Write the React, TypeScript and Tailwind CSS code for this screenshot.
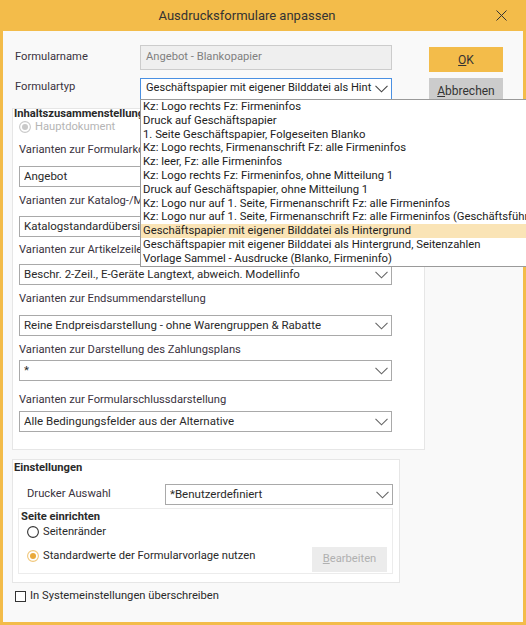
import React from "react";

const Chevron = ({ color = "#666" }: { color?: string }) => (
  <svg width="13" height="8" viewBox="0 0 13 8" className="shrink-0">
    <polyline points="0.5,0.8 6.5,6.8 12.5,0.8" fill="none" stroke={color} strokeWidth="1.1" />
  </svg>
);

const Select = ({ text, className = "" }: { text: string; className?: string }) => (
  <div className={`h-[21px] border border-[#a9a9a9] bg-white flex items-center pl-[4px] pr-[3px] text-[11.5px] ${className}`}>
    <span className="flex-1 overflow-hidden whitespace-nowrap text-[#2a2a2a]">{text}</span>
    <Chevron />
  </div>
);

const Label = ({ text, className = "" }: { text: string; className?: string }) => (
  <div className={`h-[16px] leading-[16px] text-[#3a3340] whitespace-nowrap ${className}`}>{text}</div>
);

const items = [
  "Kz: Logo rechts Fz: Firmeninfos",
  "Druck auf Geschäftspapier",
  "1. Seite Geschäftspapier, Folgeseiten Blanko",
  "Kz: Logo rechts, Firmenanschrift Fz: alle Firmeninfos",
  "Kz: leer, Fz: alle Firmeninfos",
  "Kz: Logo rechts Fz: Firmeninfos, ohne Mitteilung 1",
  "Druck auf Geschäftspapier, ohne Mitteilung 1",
  "Kz: Logo nur auf 1. Seite, Firmenanschrift Fz: alle Firmeninfos",
  "Kz: Logo nur auf 1. Seite, Firmenanschrift Fz: alle Firmeninfos (Geschäftsführer)",
  "Geschäftspapier mit eigener Bilddatei als Hintergrund",
  "Geschäftspapier mit eigener Bilddatei als Hintergrund, Seitenzahlen",
  "Vorlage Sammel - Ausdrucke (Blanko, Firmeninfo)",
];

export default function App() {
  return (
    <div
      className="relative w-[526px] h-[625px] bg-[#f3bc4a] flex flex-col text-[11.2px] overflow-hidden"
      style={{ fontFamily: "Roboto, 'Liberation Sans', Arial, sans-serif" }}
    >
      {/* Title bar */}
      <div className="h-[31px] flex items-center shrink-0">
        <div className="flex-1 text-center text-[13px] text-[#333]">Ausdrucksformulare anpassen</div>
        <div className="w-[32px] flex items-center">
          <svg width="11" height="11" viewBox="0 0 11 11" className="ml-[2px]">
            <line x1="0.5" y1="0.5" x2="10.5" y2="10.5" stroke="#333" strokeWidth="1" />
            <line x1="10.5" y1="0.5" x2="0.5" y2="10.5" stroke="#333" strokeWidth="1" />
          </svg>
        </div>
      </div>

      {/* Body */}
      <div className="flex-1 mx-[3px] mb-[3px] bg-[#f9f9f9] flex flex-col">
        {/* Top section */}
        <div className="flex items-start pt-[14px] h-[68px] shrink-0">
          <div className="flex flex-col w-[389px]">
            <div className="flex items-center h-[25px]">
              <div className="w-[137px] pl-[12px] text-[#3a3340]">Formularname</div>
              <div className="w-[252px] h-[25px] border border-[#cccccc] bg-[#efefef] flex items-center pl-[5px] text-[#7f7f7f]">
                Angebot - Blankopapier
              </div>
            </div>
            <div className="flex items-center h-[21px] mt-[8px]">
              <div className="w-[137px] pl-[12px] text-[#3a3340] -mt-[3px]">Formulartyp</div>
              <div className="w-[252px] h-[22px] border border-[#4a90e2] bg-white flex items-center pl-[5px] pr-[3px] gap-[2px] text-[11.1px]">
                <span className="flex-1 overflow-hidden whitespace-nowrap text-[#222]">Geschäftspapier mit eigener Bilddatei als Hint</span>
                <Chevron color="#444" />
              </div>
            </div>
          </div>
          <div className="ml-[37px] flex flex-col pt-[2px] gap-[6px]">
            <div className="w-[74px] h-[25px] bg-[#f3bc4a] flex items-center justify-center text-[12px] text-[#333]">
              <span><span className="underline">O</span>K</span>
            </div>
            <div className="w-[74px] h-[25px] bg-[#cccccc] flex items-center justify-center text-[12px] text-[#333]">
              <span><span className="underline">A</span>bbrechen</span>
            </div>
          </div>
        </div>

        {/* Panel 1 */}
        <div className="mt-[9px] ml-[9px] w-[413px] h-[342px] border border-[#e6e6e6] bg-white flex flex-col px-[6px] shrink-0">
          <div className="-mt-[2px] h-[14px] leading-[14px] font-bold text-[#2a2a2a] -ml-[5px]">Inhaltszusammenstellung</div>
          <div className="h-[12px] flex items-center gap-[4px] text-[#b5b5b5]">
            <svg width="12" height="12" viewBox="0 0 12 12">
              <circle cx="6" cy="6" r="5.4" fill="white" stroke="#c9c9c9" strokeWidth="1.1" />
              <circle cx="6" cy="6" r="3" fill="#c9c9c9" />
            </svg>
            <span>Hauptdokument</span>
          </div>
          <Label text="Varianten zur Formularkopfdarstellung" className="mt-[9px]" />
          <Select text="Angebot" className="mt-[8px] w-[373px]" />
          <Label text="Varianten zur Katalog-/Mengenübersicht" className="mt-[6px]" />
          <Select text="Katalogstandardübersicht" className="mt-[7px] w-[373px]" />
          <Label text="Varianten zur Artikelzeilendarstellung" className="mt-[5px]" />
          <Select text="Beschr. 2-Zeil., E-Geräte Langtext, abweich. Modellinfo" className="mt-[6px] w-[373px]" />
          <Label text="Varianten zur Endsummendarstellung" className="mt-[6px]" />
          <Select text="Reine Endpreisdarstellung - ohne Warengruppen & Rabatte" className="mt-[8px] w-[373px]" />
          <Label text="Varianten zur Darstellung des Zahlungsplans" className="mt-[6px]" />
          <Select text="*" className="mt-[2px] w-[373px]" />
          <Label text="Varianten zur Formularschlussdarstellung" className="mt-[11px]" />
          <Select text="Alle Bedingungsfelder aus der Alternative" className="mt-[3px] w-[373px]" />
        </div>

        {/* Panel 2 */}
        <div className="mt-[9px] ml-[9px] w-[388px] h-[124px] border border-[#e6e6e6] bg-white flex flex-col shrink-0">
          <div className="mt-[1px] h-[14px] leading-[14px] font-bold text-[#2a2a2a] pl-[1px]">Einstellungen</div>
          <div className="mt-[9px] flex items-center h-[21px]">
            <div className="w-[152px] pl-[14px] text-[#3a3340]">Drucker Auswahl</div>
            <Select text="*Benutzerdefiniert" className="w-[228px]" />
          </div>
          <div className="mt-[3px] ml-[5px] w-[375px] h-[66px] border border-[#ececec] flex flex-col">
            <div className="mt-[1px] h-[14px] leading-[14px] font-bold text-[#2a2a2a] pl-[2px]">Seite einrichten</div>
            <div className="mt-[2px] h-[12px] flex items-center gap-[4px] pl-[8px] text-[#2a2a2a]">
              <svg width="12" height="12" viewBox="0 0 12 12">
                <circle cx="6" cy="6" r="5.4" fill="white" stroke="#333" strokeWidth="1.1" />
              </svg>
              <span>Seitenränder</span>
            </div>
            <div className="mt-[9px] h-[25px] flex items-start pl-[8px] pr-[5px]">
              <div className="mt-[3px] h-[12px] flex items-center gap-[4px] flex-1 text-[#2a2a2a]">
                <svg width="12" height="12" viewBox="0 0 12 12">
                  <circle cx="6" cy="6" r="5.4" fill="white" stroke="#f1c77a" strokeWidth="1.1" />
                  <circle cx="6" cy="6" r="3" fill="#e9a93a" />
                </svg>
                <span>Standardwerte der Formularvorlage nutzen</span>
              </div>
              <div className="w-[75px] h-[25px] bg-[#ececec] flex items-center justify-center text-[#b0b0b0]">
                <span><span className="underline">B</span>earbeiten</span>
              </div>
            </div>
          </div>
        </div>

        {/* Checkbox */}
        <div className="mt-[6px] ml-[12px] h-[14px] flex items-center gap-[4px] text-[#2a2a2a]">
          <div className="w-[11px] h-[11px] border border-[#333] bg-white" />
          <span>In Systemeinstellungen überschreiben</span>
        </div>
      </div>

      {/* Dropdown list */}
      <div className="absolute left-[140px] top-[99px] w-[386px] border border-[#9a9a9a] border-r-0 bg-white overflow-hidden text-[11.3px]">
        {items.map((t, i) => (
          <div
            key={i}
            className={`h-[13.8px] leading-[13.8px] pl-[2px] whitespace-nowrap text-[#222] ${i === 9 ? "bg-[#fae4b6]" : ""}`}
          >
            {t}
          </div>
        ))}
      </div>
    </div>
  );
}
